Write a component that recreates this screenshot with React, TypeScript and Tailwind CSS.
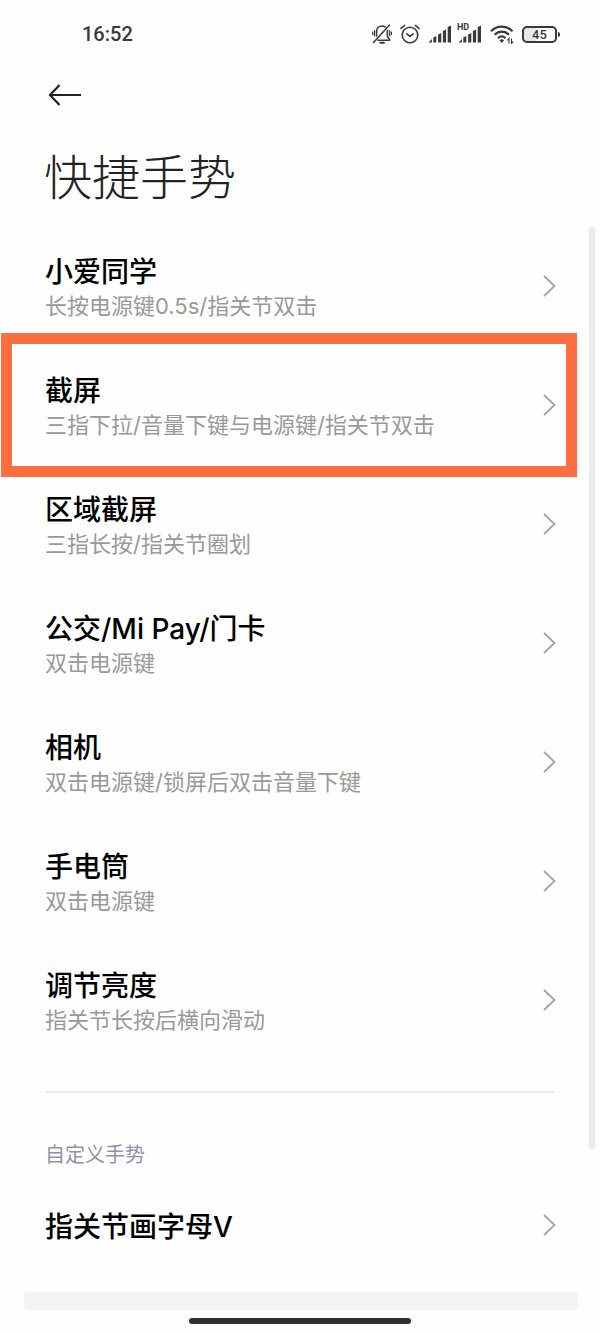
const gestures = [
  {
    id: 0,
    name: "小爱同学",
    hint: "长按电源键0.5s/指关节双击",
  },
  {
    id: 1,
    name: "截屏",
    hint: "三指下拉/音量下键与电源键/指关节双击",
    highlighted: true,
  },
  {
    id: 2,
    name: "区域截屏",
    hint: "三指长按/指关节圈划",
  },
  {
    id: 3,
    name: "公交/Mi Pay/门卡",
    hint: "双击电源键",
  },
  {
    id: 4,
    name: "相机",
    hint: "双击电源键/锁屏后双击音量下键",
  },
  {
    id: 5,
    name: "手电筒",
    hint: "双击电源键",
  },
  {
    id: 6,
    name: "调节亮度",
    hint: "指关节长按后横向滑动",
  },
];

function MutedBellIcon() {
  return (
    <svg width="20" height="20" viewBox="0 0 20 20" fill="none" stroke="currentColor" strokeWidth="1.6" strokeLinecap="round" strokeLinejoin="round">
      <path d="M4.600 12V7.500C4.600 4.200 6.800 2 10 2c1.300 0 2.300.3 3.200.9" />
      <path d="M15.400 6.500v6l2.200 2.900v.8H6" />
      <path d="M8.300 18.800h3.600" strokeWidth="2" />
      <path d="M17.500 1 1.500 18.500" />
      <path d="M2.500 6.500v5.500M.7 8v2.500M17.700 6.500v5.500M19.400 8v2.500" strokeWidth="1.200" />
    </svg>
  );
}

function AlarmIcon() {
  return (
    <svg width="20" height="20" viewBox="0 0 20 20" fill="none" stroke="currentColor" strokeWidth="1.6" strokeLinecap="round" strokeLinejoin="round">
      <circle cx="10" cy="11" r="7.8" />
      <path d="M6.8 9.8 10 12.4l3.2-2.6" />
      <path d="M1 4.4 4.6 1.4M19 4.4l-3.6-3" />
    </svg>
  );
}

function SignalIcon() {
  return (
    <svg width="24" height="18" viewBox="0 0 24 18" fill="currentColor">
      <path d="M.5 17.500 3.900 14v3.500z" />
      <path d="M5.300 12.500l3-1.500v6.500h-3z" />
      <path d="M10.100 9.500l3.200-1.500v9.500h-3.200z" />
      <path d="M14.900 6l3.200-1.500v13h-3.200z" />
      <path d="M19.700 2l3.300-1.500v17h-3.300z" />
    </svg>
  );
}

function WifiIcon() {
  return (
    <svg width="24" height="20" viewBox="0 0 24 20" fill="none" stroke="currentColor" strokeWidth="2.2">
      <path d="M1 7.2c6-6.2 15.500-6.200 21.500 0" />
      <path d="M4.600 10.800c4.300-4.200 10.200-4.200 14.400 0" />
      <path d="M8 14.200c2.400-2.200 5.300-2.200 7.600 0" />
      <path d="M9.500 16.200c1.400-1.200 3.200-1.200 4.600 0l-2.300 2.800z" fill="currentColor" stroke="none" />
      <path d="M19 19.500v-5l-1.600 1.800M21.500 14.500v5l1.600-1.800" strokeWidth="1.100" />
    </svg>
  );
}

function Battery() {
  return (
    <div className="flex items-center gap-px">
      <div className="flex h-[17px] w-[35px] items-center justify-center rounded-[5px] border-2 border-current bg-linear-to-r from-gray-200 from-40% to-white to-40% text-[13px] leading-none font-medium">
        45
      </div>
      <div className="h-[5px] w-[2px] rounded-r bg-current" />
    </div>
  );
}

function StatusBar() {
  return (
    <header className="flex h-[68px] items-center justify-between pr-10 pl-[82px] font-[Roboto,sans-serif] text-[#3a3a3a]">
      <time className="text-xl font-medium">16:52</time>
      <div className="flex items-center">
        <MutedBellIcon />
        <div className="ml-2">
          <AlarmIcon />
        </div>
        <div className="ml-2">
          <SignalIcon />
        </div>
        <div className="relative ml-[6px]">
          <SignalIcon />
          <span className="absolute -top-[2px] -left-px text-[9px] leading-none font-bold">HD</span>
        </div>
        <div className="ml-2">
          <WifiIcon />
        </div>
        <div className="ml-2">
          <Battery />
        </div>
      </div>
    </header>
  );
}

function Chevron() {
  return (
    <svg className="shrink-0" width="14" height="22" viewBox="0 0 14 22" fill="none" stroke="#a3a3a3" strokeWidth="1.8">
      <path d="M2 1 12.500 11 2 21" />
    </svg>
  );
}

type RowProps = {
  name: string;
  hint?: string;
  highlighted?: boolean;
};

function Row({ name, hint, highlighted }: RowProps) {
  return (
    <li className="relative">
      <button className="flex h-[119px] w-full items-center justify-between pr-11 pl-[45px] text-left">
        <span className="block pt-1">
          <span className="block text-[28px] leading-9 font-medium text-black">{name}</span>
          {hint && <span className="block text-[22px] leading-8 text-[#999999]">{hint}</span>}
        </span>
        <Chevron />
      </button>
      {highlighted && (
        <div className="pointer-events-none absolute -top-3 right-[23px] -bottom-[13px] left-px border-[11px] border-[#ff6e40]" />
      )}
    </li>
  );
}

function App() {
  return (
    <div className="flex min-h-screen flex-col bg-[#fefefe] font-[Inter,'Noto_Sans_CJK_SC',sans-serif]">
      <StatusBar />
      <button aria-label="返回" className="mt-4 ml-12 self-start text-[#222222]">
        <svg width="34" height="22" viewBox="0 0 34 22" fill="none" stroke="currentColor" strokeWidth="2.2">
          <path d="M11.500 1 2 11l9.500 10M2 11h31" />
        </svg>
      </button>
      <h1 className="mt-9 ml-11 text-5xl leading-[72px] font-light text-[#222222]">快捷手势</h1>
      <main className="relative mt-3">
        <ul>
          {gestures.map((item) => {
            return <Row key={item.id} name={item.name} hint={item.hint} highlighted={item.highlighted} />;
          })}
        </ul>
        <hr className="mx-[45px] mt-8 border-t-2 border-[#ececec]" />
        <h2 className="mt-13 ml-[45px] text-xl leading-5 font-normal text-[#9093a8]">自定义手势</h2>
        <ul>
          <Row name="指关节画字母V" />
        </ul>
        <div className="absolute top-px right-[5px] bottom-[135px] w-[6px] bg-[#ececec]" />
      </main>
      <div className="mr-[22px] ml-6 mt-2 h-[18px] rounded bg-[#f4f4f4]" />
      <div className="mx-auto mt-2 h-[6px] w-[37%] rounded-full bg-[#303030]" />
    </div>
  );
}

export default App;
